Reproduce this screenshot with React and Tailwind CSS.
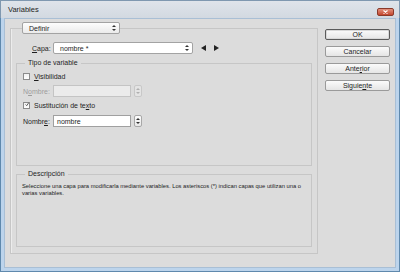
import React from "react";

function UpDown({ color = "#333" }) {
  return (
    <svg width="4" height="6" viewBox="0 0 4 6" className="shrink-0">
      <path d="M2 0 L4 2 L0 2Z M0 4 L4 4 L2 6Z" fill={color} />
    </svg>
  );
}

function Spin({ disabled }) {
  return (
    <div
      className={`ml-[3px] w-[8px] h-[12px] rounded-[2px] border flex items-center justify-center ${
        disabled ? "border-[#c8c8c8] bg-[#e4e4e4]" : "border-[#a8a8a8] bg-gradient-to-b from-[#fdfdfd] to-[#e8e8e8]"
      }`}
    >
      <UpDown color={disabled ? "#b0b0b0" : "#333"} />
    </div>
  );
}

function CheckBox({ checked }) {
  return (
    <div className="w-[7px] h-[7px] border border-[#8c8c8c] bg-gradient-to-b from-[#f2f2f2] to-[#ffffff] flex items-center justify-center shrink-0">
      {checked && (
        <svg width="7" height="7" viewBox="0 0 7 7" className="-mt-[2px] ml-[1px]">
          <path d="M1 3.5 L3 5.5 L6.5 0.5" fill="none" stroke="#222" strokeWidth="1.2" />
        </svg>
      )}
    </div>
  );
}

function Button({ children, primary }) {
  return (
    <div
      className={`h-[11px] w-[65px] rounded-[2px] border flex items-center justify-center text-[7px] leading-none text-[#1e1e1e] bg-gradient-to-b from-[#fbfbfb] to-[#e5e5e5] ${
        primary ? "border-[#5b5b5b] shadow-[inset_0_0_0_1px_#d8d8d8]" : "border-[#9a9a9a]"
      }`}
    >
      {children}
    </div>
  );
}

export default function App() {
  return (
    <div className="w-[400px] h-[272px] flex flex-col font-['Liberation_Sans',Arial,sans-serif] text-[#1e1e1e] overflow-hidden">
      {/* Title bar */}
      <div className="h-[18px] shrink-0 flex items-center justify-between bg-gradient-to-b from-[#dfe4ea] to-[#d2d9e1] border-t border-x border-[#7f98b0] pl-[7px] pr-[5px]">
        <span className="text-[7.5px] text-[#222]">Variables</span>
        <div className="w-[17px] h-[8px] mt-[4px] rounded-[2px] bg-gradient-to-b from-[#e2917e] to-[#c2452d] border border-[#8a3a2a] flex items-center justify-center">
          <svg width="5" height="4" viewBox="0 0 5 4">
            <path d="M0.5 0.5 L4.5 3.5 M4.5 0.5 L0.5 3.5" stroke="#fff" strokeWidth="1.2" />
          </svg>
        </div>
      </div>

      {/* Frame */}
      <div className="flex-1 flex bg-[#bcd4ec] border-x border-b border-[#5f89ad] px-[3px] pb-[3px]">
        <div className="flex-1 flex bg-[#dcdcdc] border border-[#a9bfd5] pl-[5px] pt-[3px]">
          {/* Main group */}
          <fieldset className="w-[308px] h-[232px] border border-[#c6c6c6] shadow-[inset_1px_0_0_#ececec] px-[5px] pb-[8px]">
            <legend className="ml-[6px] px-0">
              <div className="flex items-center justify-between h-[12px] w-[98px] border border-[#a3a3a3] rounded-[2px] bg-gradient-to-b from-[#fdfdfd] to-[#ebebeb] pl-[6px] pr-[3px] text-[7px] leading-none">
                <span>Definir</span>
                <UpDown />
              </div>
            </legend>

            {/* Capa row */}
            <div className="flex items-center mt-[8px] ml-[16px] h-[12px]">
              <span className="w-[21px] text-[7px] leading-none">
                <span className="underline underline-offset-[1px]">C</span>apa:
              </span>
              <div className="flex items-center justify-between h-[12px] w-[140px] border border-[#a3a3a3] rounded-[2px] bg-white pl-[6px] pr-[3px] text-[7px] leading-none">
                <span>nombre *</span>
                <UpDown />
              </div>
              <div className="flex items-center gap-[8px] ml-[8px]">
                <svg width="5" height="6" viewBox="0 0 5 6">
                  <path d="M5 0 L0 3 L5 6Z" fill="#222" />
                </svg>
                <svg width="5" height="6" viewBox="0 0 5 6">
                  <path d="M0 0 L5 3 L0 6Z" fill="#222" />
                </svg>
              </div>
            </div>

            {/* Tipo de variable */}
            <fieldset className="mt-[5px] h-[107px] border border-[#c6c6c6] pl-[6px]">
              <legend className="ml-[2px] px-[3px] text-[7px] leading-[8px]">Tipo de variable</legend>

              <div className="flex items-center mt-[5px] h-[9px] gap-[4px]">
                <CheckBox />
                <span className="text-[7px] leading-none">
                  <span className="underline underline-offset-[1px]">V</span>isibilidad
                </span>
              </div>

              <div className="flex items-center mt-[4px] h-[12px]">
                <span className="w-[30px] text-[7px] leading-none text-[#9c9c9c]">
                  N<span className="underline underline-offset-[1px]">o</span>mbre:
                </span>
                <div className="w-[78px] h-[12px] border border-[#c4c4c4] bg-[#ebebeb]" />
                <Spin disabled />
              </div>

              <div className="flex items-center mt-[4px] h-[9px] gap-[4px]">
                <CheckBox checked />
                <span className="text-[7px] leading-none">
                  Sustitución de te<span className="underline underline-offset-[1px]">x</span>to
                </span>
              </div>

              <div className="flex items-center mt-[5px] h-[12px]">
                <span className="w-[30px] text-[7px] leading-none">
                  Nombr<span className="underline underline-offset-[1px]">e</span>:
                </span>
                <div className="w-[78px] h-[12px] border border-[#a0a0a0] bg-white flex items-center pl-[3px] text-[7px] leading-none">
                  nombre
                </div>
                <Spin />
              </div>
            </fieldset>

            {/* Descripción */}
            <fieldset className="mt-[4px] h-[77px] border border-[#c6c6c6] pl-[5px]">
              <legend className="ml-[3px] px-[3px] text-[7px] leading-[8px]">Descripción</legend>
              <p className="mt-[5px] text-[5.8px] leading-[7px] whitespace-nowrap text-[#222]">
                Seleccione una capa para modificarla mediante variables. Los asteriscos (*) indican capas que utilizan una o
                <br />
                varias variables.
              </p>
            </fieldset>
          </fieldset>

          {/* Buttons */}
          <div className="ml-[7px] pt-[7px] flex flex-col gap-[6px]">
            <Button primary>OK</Button>
            <Button>Cancelar</Button>
            <Button>
              Ante<span className="underline underline-offset-[1px]">r</span>ior
            </Button>
            <Button>
              Siguie<span className="underline underline-offset-[1px]">n</span>te
            </Button>
          </div>
        </div>
      </div>
    </div>
  );
}
